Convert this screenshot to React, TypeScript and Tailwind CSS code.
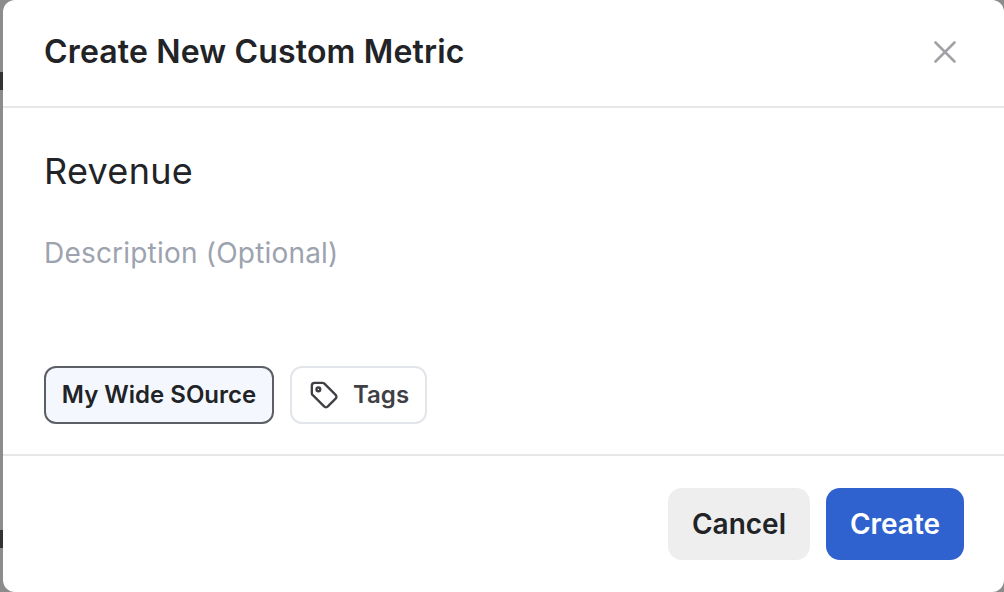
import React from "react";

function TagIcon() {
  return (
    <svg width="30" height="30" viewBox="0 0 32 32" fill="none" stroke="#3f3f46" strokeWidth="2.5" strokeLinejoin="round" strokeLinecap="round">
      <path d="M3 6c0-1.700 1.300-3 3-3h8.300c.8 0 1.500.3 2.100.9l12 12c1.100 1.100 1.100 2.900 0 4l-8.300 8.300c-1.100 1.100-2.900 1.100-4 0l-12-12C3.300 15.600 3 14.800 3 14z" />
      <circle cx="10" cy="10" r="2" />
    </svg>
  );
}

export default function App() {
  return (
    <div className="w-[1004px] h-[592px] bg-[#8c8c8c] pl-[3px] overflow-hidden font-['Inter',sans-serif] relative">
      <div className="absolute left-0 top-[72px] w-[3px] h-[18px] bg-[#333333]" />
      <div className="absolute left-0 top-[530px] w-[3px] h-[18px] bg-[#333333]" />
      <div className="relative w-[1001px] h-[592px] bg-white rounded-[12px] flex flex-col">
        <div className="h-[108px] shrink-0 border-b-2 border-[#e6e7e9] flex items-center justify-between pl-[41px] pr-[45px]">
          <h1 className="text-[32px] leading-[36px] tracking-[0.16px] font-semibold text-[#212326] mt-[-3px]">Create New Custom Metric</h1>
          <svg width="28" height="28" viewBox="0 0 28 28" fill="none" stroke="#a0a2a6" strokeWidth="2.6" strokeLinecap="round" className="mt-[-3px]">
            <path d="M4.500 4.500l19 19M23.500 4.500l-19 19" />
          </svg>
        </div>
        <div className="h-[348px] shrink-0 border-b-2 border-[#e6e7e9] pl-[41px] flex flex-col">
          <div className="text-[36px] leading-[42px] tracking-[0.3px] text-[#212326] mt-[42px]">Revenue</div>
          <div className="text-[28px] leading-[32px] tracking-[0.2px] text-[#9ca3af] mt-[45px]">Description (Optional)</div>
          <div className="flex gap-[16px] mt-[97px]">
            <div className="h-[58px] w-[230px] justify-center flex items-center rounded-[12px] border-2 border-[#5c6066] bg-[#f4f8fe] text-[24px] font-semibold text-[#212326]">My Wide SOurce</div>
            <div className="h-[58px] w-[137px] pl-[17px] flex items-center gap-[14px] rounded-[12px] border-2 border-[#e2e5e9] bg-white text-[24px] font-semibold text-[#3f3f46]">
              <TagIcon />
              <span>Tags</span>
            </div>
          </div>
        </div>
        <div className="flex-1 flex justify-end gap-[16px] pr-[40px] pt-[32px]">
          <div className="w-[142px] h-[72px] flex items-center justify-center rounded-[14px] bg-[#eeeeee] text-[28px] font-semibold text-[#212326]">Cancel</div>
          <div className="w-[138px] h-[72px] flex items-center justify-center rounded-[14px] bg-[#2f62cf] text-[28px] font-semibold text-white">Create</div>
        </div>
      </div>
    </div>
  );
}
